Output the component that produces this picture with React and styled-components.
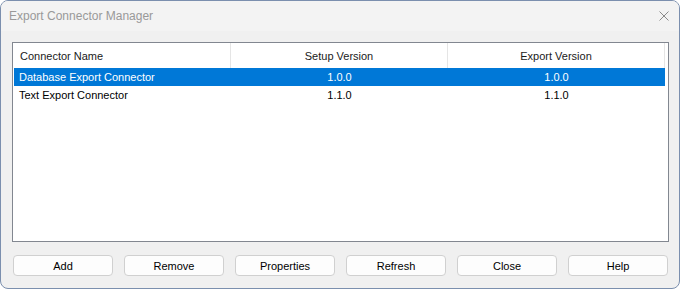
import React, { useState } from "react";
import styled, { createGlobalStyle } from "styled-components";

const GlobalStyle = createGlobalStyle`
  html, body {
    margin: 0;
    padding: 0;
    background: #ffffff;
  }
  * {
    box-sizing: border-box;
  }
`;

const Window = styled.div`
  width: 680px;
  height: 289px;
  border: 1px solid #7b8fae;
  border-radius: 8px;
  overflow: hidden;
  background: #f0f0f0;
  display: flex;
  flex-direction: column;
  font-family: "Liberation Sans", Arial, sans-serif;
`;

const TitleBar = styled.div`
  height: 30px;
  flex: none;
  background: #f3f3f3;
  display: flex;
  align-items: center;
  justify-content: space-between;
  padding: 0 10px 0 8px;
`;

const Title = styled.span`
  font-size: 12px;
  color: #999999;
`;

const CloseIcon = styled.svg`
  width: 10px;
  height: 10px;
  display: block;
`;

const Body = styled.div`
  flex: 1;
  display: flex;
  flex-direction: column;
  gap: 13px;
  padding: 11px 10px 12px 11px;
`;

const ListBox = styled.div`
  height: 200px;
  border: 1px solid #828790;
  background: #ffffff;
  display: flex;
  flex-direction: column;
`;

const HeaderRow = styled.div`
  display: flex;
  height: 25px;
  flex: none;
`;

const HeaderCell = styled.div`
  width: ${({ $w }) => $w}px;
  border-right: 1px solid #e5e5e5;
  display: flex;
  align-items: center;
  justify-content: ${({ $center }) => ($center ? "center" : "flex-start")};
  padding-left: ${({ $center }) => ($center ? 0 : 7)}px;
  font-size: 11px;
  color: #1a1a1a;
`;

const Row = styled.div`
  display: flex;
  height: 18px;
  margin-left: 1px;
  width: 651px;
  background: ${({ $selected }) => ($selected ? "#0078d7" : "transparent")};
  color: ${({ $selected }) => ($selected ? "#ffffff" : "#000000")};
  cursor: default;
`;

const Cell = styled.div`
  width: ${({ $w }) => $w}px;
  display: flex;
  align-items: center;
  justify-content: ${({ $center }) => ($center ? "center" : "flex-start")};
  padding-left: ${({ $center }) => ($center ? 0 : 5)}px;
  font-size: 11px;
`;

const ButtonBar = styled.div`
  display: flex;
  justify-content: space-between;
  padding: 0 1px;
`;

const Button = styled.button`
  width: 100px;
  height: 21px;
  background: #fdfdfd;
  border: 1px solid #d0d0d0;
  border-radius: 4px;
  font-family: "Liberation Sans", Arial, sans-serif;
  font-size: 11px;
  color: #000000;
  padding: 0;
  &:hover {
    background: #f5f5f5;
  }
`;

const connectors = [
  { name: "Database Export Connector", setup: "1.0.0", exp: "1.0.0" },
  { name: "Text Export Connector", setup: "1.1.0", exp: "1.1.0" },
];

const buttons = ["Add", "Remove", "Properties", "Refresh", "Close", "Help"];

export default function App() {
  const [selected, setSelected] = useState(0);

  return (
    <>
      <GlobalStyle />
      <Window>
        <TitleBar>
          <Title>Export Connector Manager</Title>
          <CloseIcon viewBox="0 0 10 10">
            <path d="M0.5 0.5 L9.5 9.5 M9.5 0.5 L0.5 9.5" stroke="#8a8a8a" strokeWidth="1" />
          </CloseIcon>
        </TitleBar>
        <Body>
          <ListBox>
            <HeaderRow>
              <HeaderCell $w={218}>Connector Name</HeaderCell>
              <HeaderCell $w={217} $center>Setup Version</HeaderCell>
              <HeaderCell $w={217} $center>Export Version</HeaderCell>
            </HeaderRow>
            {connectors.map((c, i) => (
              <Row key={c.name} $selected={i === selected} onClick={() => setSelected(i)}>
                <Cell $w={217}>{c.name}</Cell>
                <Cell $w={217} $center>{c.setup}</Cell>
                <Cell $w={217} $center>{c.exp}</Cell>
              </Row>
            ))}
          </ListBox>
          <ButtonBar>
            {buttons.map((b) => (
              <Button key={b}>{b}</Button>
            ))}
          </ButtonBar>
        </Body>
      </Window>
    </>
  );
}
